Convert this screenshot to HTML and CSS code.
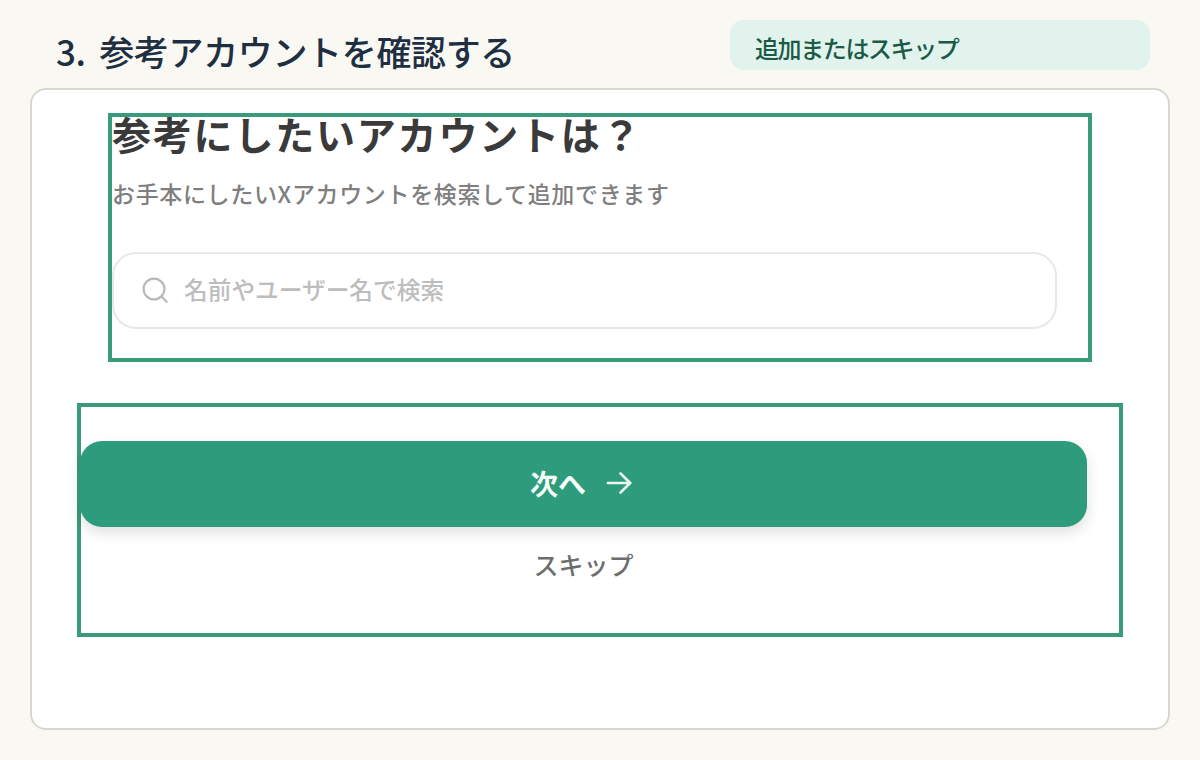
FILE: index.html
```html
<!DOCTYPE html>
<html lang="ja">

<head>
    <meta charset="UTF-8">
    <meta name="viewport" content="width=device-width, initial-scale=1.0">
    <title>参考アカウントを確認する</title>

    <link rel="stylesheet" href="styles.css">
</head>

<body>

    <div id="page">

        <div class="page-header">
            <h1 class="step-title">3. 参考アカウントを確認する</h1>
            <div class="step-note">追加またはスキップ</div>
        </div>

        <div class="card">

            <!-- Search section -->
            <div class="frame frame-search">
                <h2 class="question">参考にしたいアカウントは？</h2>
                <p class="question-sub">お手本にしたいXアカウントを検索して追加できます</p>
                <div class="search-box">
                    <svg class="search-icon" viewBox="0 0 26 26" fill="none" stroke="#b9b9b9" stroke-width="2.2" stroke-linecap="round">
                        <circle cx="12" cy="12" r="10.4"></circle>
                        <path d="M19.6 19.6 L24.6 24.8"></path>
                    </svg>
                    <input class="search-input" type="text" placeholder="名前やユーザー名で検索">
                </div>
            </div>

            <!-- Actions -->
            <div class="frame frame-actions">
                <button class="next-button" type="button">
                    <span>次へ</span>
                    <svg class="next-icon" viewBox="0 0 28 24" fill="none" stroke="#e9f6f1" stroke-width="2.8" stroke-linecap="round" stroke-linejoin="round">
                        <path d="M2 12 H25"></path>
                        <path d="M15 2 L25 12 L15 22"></path>
                    </svg>
                </button>
                <button class="skip-button" type="button">スキップ</button>
            </div>

        </div>
    </div>

</body>

</html>
```

FILE: styles.css
```css
* {
    box-sizing: border-box;
}

body {
    margin: 0;
    font-family: "Noto Sans CJK JP", "Noto Sans", sans-serif;
    background-color: #f9f8f3;
}

#page {
    width: 1200px;
    height: 760px;
    padding: 20px 30px 30px;
}

.page-header {
    display: flex;
    justify-content: space-between;
    align-items: flex-start;
    height: 68px;
    padding-left: 26px;
    padding-right: 20px;
}

.step-title {
    margin: 5px 0 0;
    font-size: 35px;
    line-height: 52px;
    font-weight: 500;
    color: #1e2f42;
    letter-spacing: -0.35px;
    word-spacing: 6px;
}

.step-note {
    width: 420px;
    height: 50px;
    padding-left: 25px;
    font-size: 24px;
    line-height: 56px;
    font-weight: 500;
    color: #1a5a47;
    letter-spacing: -1.4px;
    background-color: #e1f3ec;
    border-radius: 14px;
}

.card {
    height: 642px;
    padding: 23px 45px 0;
    background-color: white;
    border: 2px solid #d8d7d1;
    border-radius: 16px;
}

.frame {
    border: 4px solid #3a9b7c;
}

.frame-search {
    width: 984px;
    height: 249px;
    margin-left: 31px;
}

.question {
    margin: 0;
    font-size: 39px;
    line-height: 32px;
    font-weight: 700;
    color: #3a3a3a;
    letter-spacing: 1.8px;
}

.question-sub {
    margin: 26px 0 0;
    font-size: 23px;
    line-height: 36px;
    font-weight: 500;
    color: #7f7f7f;
    letter-spacing: 0.65px;
}

.search-box {
    display: flex;
    align-items: center;
    gap: 16px;
    width: 945px;
    height: 77px;
    margin-top: 41px;
    padding-left: 28px;
    border: 2px solid #e8e8e8;
    border-radius: 24px;
}

.search-icon {
    width: 26px;
    height: 26px;
    flex-shrink: 0;
    margin-bottom: 2px;
}

.search-input {
    flex: 1;
    height: 100%;
    padding: 0 0 4px;
    font-family: inherit;
    font-size: 23.7px;
    font-weight: 500;
    background: none;
    border: none;
    outline: none;
}

.search-input::placeholder {
    color: #bdbdbd;
    opacity: 1;
}

.frame-actions {
    width: 1046px;
    height: 234px;
    margin-top: 41px;
    padding-top: 34px;
}

.next-button {
    display: flex;
    justify-content: center;
    align-items: center;
    gap: 20px;
    width: 1007px;
    height: 86px;
    margin-left: -1px;
    padding: 0 4px 3px 0;
    font-family: inherit;
    font-size: 28px;
    font-weight: 700;
    color: #f4fbf8;
    background-color: #2e9b7c;
    border: none;
    border-radius: 22px;
    box-shadow: 0 6px 14px rgba(0, 0, 0, 0.12);
    cursor: pointer;
}

.next-icon {
    width: 27px;
    height: 24px;
}

.skip-button {
    display: block;
    width: 1007px;
    margin-top: 16px;
    margin-left: -1px;
    padding: 0;
    font-family: inherit;
    font-size: 25px;
    line-height: 42px;
    font-weight: 500;
    color: #6e6e6e;
    background: none;
    border: none;
    cursor: pointer;
}
```
